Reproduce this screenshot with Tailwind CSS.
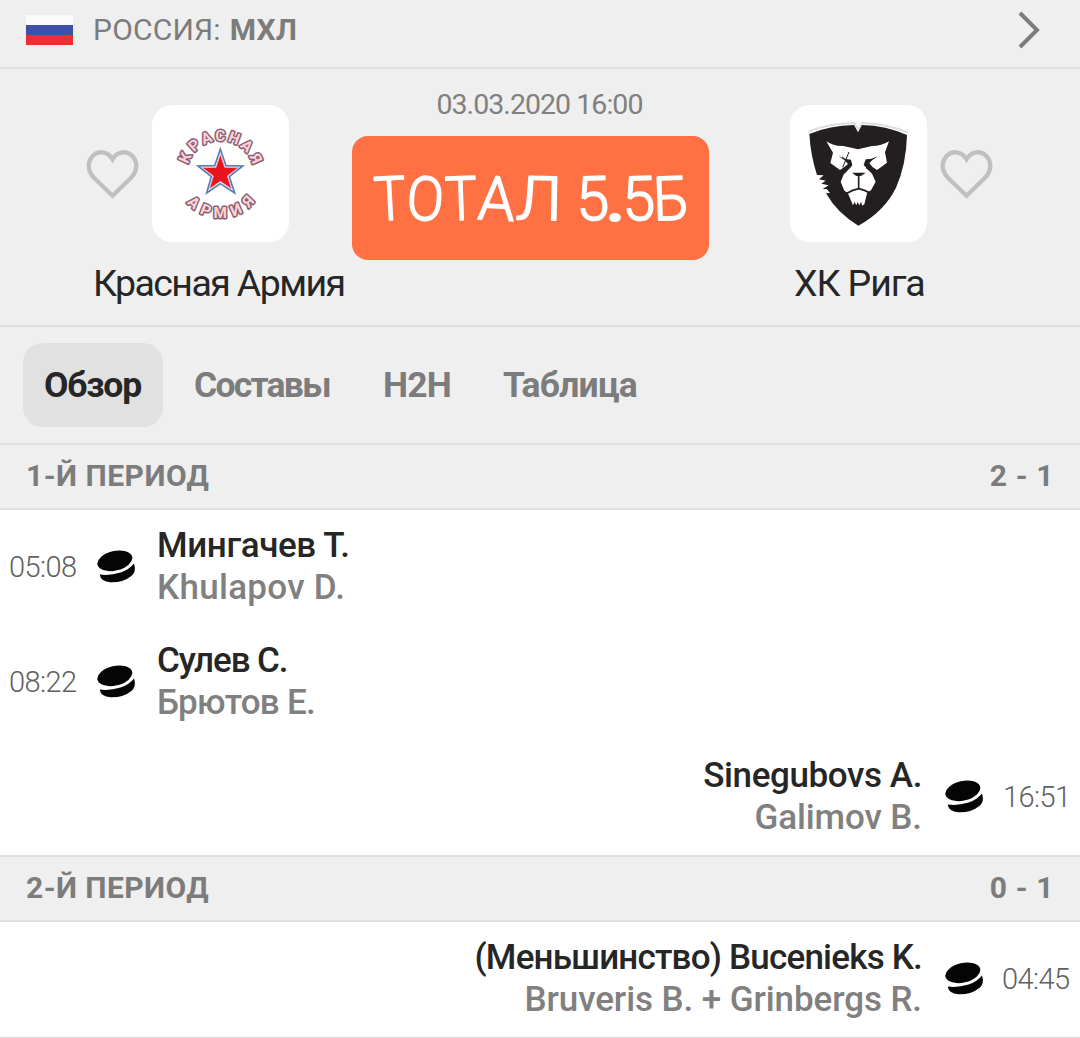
<!DOCTYPE html>
<html lang="ru">
<head>
  <meta charset="UTF-8" />
  <meta name="viewport" content="width=device-width, initial-scale=1.0"/>
  <title>Красная Армия - ХК Рига</title>
  <script src="https://cdn.jsdelivr.net/npm/@tailwindcss/browser@4"></script>
</head>
<body class="bg-white font-['Roboto',sans-serif] text-[#262626] w-[1080px] h-[1038px] overflow-hidden whitespace-nowrap">

  <!-- shared shapes -->
  <svg class="hidden">
    <symbol id="heart" viewBox="33 40 160 152">
      <path d="M113 183 L57 129 C39 110 36 84 50 67 C67 45 98 47 113 73 C128 47 159 45 176 67 C190 84 187 110 169 129 Z" fill="none" stroke="#c0c0c0" stroke-width="13"/>
    </symbol>
    <symbol id="puck" viewBox="36 30 116 98">
      <ellipse cx="89" cy="62" rx="53" ry="29" transform="rotate(-13 89 62)" fill="#050505"/>
      <path d="M44 103 Q74 107 106 97 Q132 88 146 70 Q154 94 138 107 Q114 127 76 126 Q47 124 44 103 Z" fill="#050505"/>
    </symbol>
  </svg>

  <header class="h-[69px] bg-[#efefef] border-b-2 border-[#e0e0e0] flex items-center pl-[26px] pr-[40px] pb-[8px] text-[30px] leading-[30px] text-[#7c7c7c]">
    <div class="w-[47px] h-[30px] flex flex-col">
      <div class="flex-1 bg-[#fafafa]"></div>
      <div class="flex-1 bg-[#3b50a8]"></div>
      <div class="flex-1 bg-[#ee2e2e]"></div>
    </div>
    <span class="ml-[20px] tracking-[0.2px]">РОССИЯ:</span>
    <b class="ml-[9px] tracking-[0.1px]">МХЛ</b>
    <svg class="ml-auto w-[22px] h-[38px]" viewBox="0 0 22 38"><path d="M2 2 L19 19 L2 36" fill="none" stroke="#7c7c7c" stroke-width="4"/></svg>
  </header>

  <section class="h-[258px] bg-[#efefef] border-b-2 border-[#e0e0e0] flex pl-[86px]">
    <div class="w-[260px] pt-[36px]">
      <div class="flex items-center gap-[13px]">
        <svg class="w-[53px] h-[51px]"><use href="#heart"/></svg>
        <svg class="w-[137px] h-[137px] bg-white rounded-[20px]" viewBox="35 27 411 411">
          <path d="M240 160 L257 209 L307 210 L267 242 L283 291 L240 263 L199 291 L213 242 L173 210 L223 209 Z" fill="#fff" stroke="#4f7eba" stroke-width="5"/>
          <path d="M240 175 L253 214 L294 215 L261 240 L274 279 L240 256 L207 279 L219 240 L186 215 L227 214 Z" fill="#e8141e" stroke="#f3aab2" stroke-width="3"/>
          <g font-family="Roboto" font-weight="700" font-size="46" text-anchor="middle" fill="#fbd3d8" stroke="#8a5e74" stroke-width="9" stroke-linejoin="round" paint-order="stroke">
            <text x="240" y="134" transform="rotate(-65 240 235)">К</text>
            <text x="240" y="134" transform="rotate(-42 240 235)">Р</text>
            <text x="240" y="134" transform="rotate(-21 240 235)">А</text>
            <text x="240" y="134">С</text>
            <text x="240" y="134" transform="rotate(21 240 235)">Н</text>
            <text x="240" y="134" transform="rotate(43 240 235)">А</text>
            <text x="240" y="134" transform="rotate(66 240 235)">Я</text>
            <text x="240" y="367" transform="rotate(43 240 235)">А</text>
            <text x="240" y="367" transform="rotate(22 240 235)">Р</text>
            <text x="240" y="367">М</text>
            <text x="240" y="367" transform="rotate(-24 240 235)">И</text>
            <text x="240" y="367" transform="rotate(-46 240 235)">Я</text>
          </g>
        </svg>
      </div>
      <div class="mt-[19px] pl-[7px] text-[37.5px] leading-[44px] tracking-[-1.6px]">Красная Армия</div>
    </div>

    <div class="w-[357px] ml-[6px] pt-[19px] text-center">
      <div class="text-[28.5px] leading-[33px] tracking-[-0.95px] text-[#808080] pl-[18px]">03.03.2020 16:00</div>
      <svg class="mt-[15px] w-[357px] h-[124px] bg-[#ff7043] rounded-[16px]" viewBox="0 0 357 124">
        <g font-family="Roboto" font-weight="300" font-size="61" fill="#fff" stroke="#fff" stroke-width="1.6" stroke-linejoin="round">
          <text x="22" y="84" textLength="32" lengthAdjust="spacingAndGlyphs" transform="rotate(-3 38 63)">Т</text>
          <text x="55" y="84" textLength="37" lengthAdjust="spacingAndGlyphs" transform="rotate(4 73 63)">О</text>
          <text x="93" y="84" textLength="32" lengthAdjust="spacingAndGlyphs" transform="rotate(-2 109 63)">Т</text>
          <text x="126" y="84" textLength="37" lengthAdjust="spacingAndGlyphs" transform="rotate(3 145 63)">А</text>
          <text x="164" y="84" textLength="46" lengthAdjust="spacingAndGlyphs" transform="rotate(1 187 63)">Л</text>
          <text x="224" y="84" textLength="33" lengthAdjust="spacingAndGlyphs" transform="rotate(-2 241 63)">5</text>
          <text x="254" y="84" textLength="19" lengthAdjust="spacingAndGlyphs" stroke-width="4">.</text>
          <text x="270" y="84" textLength="33" lengthAdjust="spacingAndGlyphs" transform="rotate(-2 287 63)">5</text>
          <text x="301" y="84" textLength="36" lengthAdjust="spacingAndGlyphs" transform="rotate(-2 319 63)">Б</text>
        </g>
      </svg>
    </div>

    <div class="ml-[81px] pt-[36px]">
      <div class="flex items-center gap-[13px]">
        <svg class="w-[137px] h-[137px] bg-white rounded-[20px]" viewBox="30 27 411 411">
          <path d="M86 106 Q150 82 222 81 L234 100 L246 81 Q318 83 383 109" fill="none" stroke="#dedede" stroke-width="6"/>
          <path d="M88 114 Q150 88 222 87 L234 109 L246 87 Q318 89 381 117 Q379 205 348 275 Q313 346 235 389 Q172 352 138 292 L150 291 L140 279 L128 279 L146 268 L124 263 L137 254 L117 250 L131 238 L111 237 Q92 180 88 114 Z" fill="#231f20"/>
          <!-- lion head -->
          <path d="M139 136 Q160 151 190 150 L234 160 L276 150 Q305 150 327 136 L315 169 L321 200 L291 222 Q275 214 265 198 L258 217 L274 229 L287 257 L273 283 L262 289 L253 325 L247 329 L243 318 L238 328 L233 318 L229 328 L224 318 L219 328 L203 290 L193 284 L182 257 L193 231 L213 212 L206 205 L180 222 L151 201 L159 170 Z" fill="#fff"/>
          <!-- eyes, nose, mouth -->
          <path d="M176 181 Q194 190 213 191 L217 208 L194 233 L183 222 L204 204 L193 192 Z M294 181 Q276 190 257 190 L251 207 L276 233 L289 222 L265 205 L277 192 Z M216 230 H257 L243 240 H229 Z" fill="#231f20"/>
          <path d="M236 236 V278 M201 292 Q218 282 236 278 Q254 282 271 292" fill="none" stroke="#231f20" stroke-width="5"/>
          <path d="M207 168 L188 214 M186 182 L208 203" fill="none" stroke="#231f20" stroke-width="3"/>
        </svg>
        <svg class="w-[53px] h-[51px]"><use href="#heart"/></svg>
      </div>
      <div class="mt-[19px] pl-[4px] text-[37.5px] leading-[44px] tracking-[-1.1px]">ХК Рига</div>
    </div>
  </section>

  <nav class="h-[118px] bg-[#efefef] border-b-2 border-[#e0e0e0] flex pt-[16px] pl-[23px] text-[35.5px] leading-[84px] font-bold text-[#7c7c7c]">
    <a class="w-[140px] h-[84px] pl-[21px] rounded-[20px] bg-[#e1e1e1] text-[#262626] tracking-[-1.2px]">Обзор</a>
    <a class="w-[158px] ml-[31px] tracking-[-1.75px]">Составы</a>
    <a class="w-[120px] ml-[31px] tracking-[-0.8px]">H2H</a>
    <a class="tracking-[-0.8px]">Таблица</a>
  </nav>

  <div class="h-[65px] bg-[#efefef] border-b-2 border-[#e0e0e0] flex justify-between pl-[26px] pr-[26px] text-[30px] leading-[61px] font-bold text-[#7c7c7c]">
    <span class="tracking-[0.5px]">1-Й ПЕРИОД</span>
    <span class="tracking-[0.6px]">2 - 1</span>
  </div>

  <div class="h-[115px] pt-[15px] pl-[9px] flex items-start">
    <span class="w-[88px] text-[29px] leading-[85px] font-light tracking-[-0.6px] text-[#606060]">05:08</span>
    <svg class="w-[39px] h-[33px] mt-[25px]"><use href="#puck"/></svg>
    <div class="ml-[21px] text-[35px] leading-[42px] font-medium">
      <div class="tracking-[-0.4px]">Мингачев Т.</div>
      <div class="tracking-[0.3px] text-[#808080]">Khulapov D.</div>
    </div>
  </div>

  <div class="h-[115px] pt-[15px] pl-[9px] flex items-start">
    <span class="w-[88px] text-[29px] leading-[85px] font-light tracking-[-0.6px] text-[#606060]">08:22</span>
    <svg class="w-[39px] h-[33px] mt-[25px]"><use href="#puck"/></svg>
    <div class="ml-[21px] text-[35px] leading-[42px] font-medium">
      <div class="tracking-[-1.1px]">Сулев С.</div>
      <div class="tracking-[-0.73px] text-[#808080]">Брютов Е.</div>
    </div>
  </div>

  <div class="h-[115px] pt-[15px] flex items-start justify-end">
    <div class="mr-[23px] text-[35px] leading-[42px] font-medium text-right">
      <div class="tracking-[-0.4px]">Sinegubovs A.</div>
      <div class="tracking-[-0.09px] text-[#808080]">Galimov B.</div>
    </div>
    <svg class="w-[39px] h-[33px] mt-[25px]"><use href="#puck"/></svg>
    <span class="w-[96px] pl-[19px] text-[29px] leading-[85px] font-light tracking-[-0.6px] text-[#606060]">16:51</span>
  </div>

  <div class="h-[67px] bg-[#efefef] border-y-2 border-[#e0e0e0] flex justify-between pl-[26px] pr-[26px] text-[30px] leading-[61px] font-bold text-[#7c7c7c]">
    <span class="tracking-[0.45px]">2-Й ПЕРИОД</span>
    <span class="tracking-[0.6px]">0 - 1</span>
  </div>

  <div class="h-[116px] pt-[15px] border-b border-[#d8d8d8] flex items-start justify-end">
    <div class="mr-[23px] text-[35px] leading-[42px] font-medium text-right">
      <div class="tracking-[-0.8px]">(Меньшинство) Bucenieks K.</div>
      <div class="tracking-[-0.09px] text-[#808080]">Bruveris B. + Grinbergs R.</div>
    </div>
    <svg class="w-[39px] h-[33px] mt-[25px]"><use href="#puck"/></svg>
    <span class="w-[96px] pl-[18px] text-[29px] leading-[85px] font-light tracking-[-0.6px] text-[#606060]">04:45</span>
  </div>

</body>
</html>
